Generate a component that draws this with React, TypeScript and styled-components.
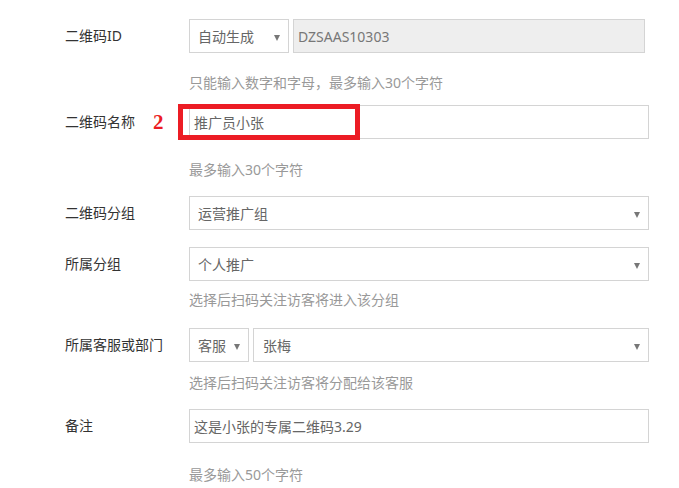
import React from "react";
import styled, { createGlobalStyle } from "styled-components";

const Global = createGlobalStyle`
  html, body { margin: 0; padding: 0; background: #fff; }
  body { font-family: "Noto Sans", "Noto Sans CJK SC", sans-serif; font-size: 14px; color: #333; }
`;

const Form = styled.div`
  width: 679px;
  height: 488px;
  padding: 19px 0 0 65px;
  box-sizing: border-box;
  overflow: hidden;
`;

const Row = styled.div<{ $mb?: number }>`
  display: flex;
  align-items: center;
  height: 34px;
  position: relative;
  margin-bottom: ${(p) => p.$mb ?? 0}px;
`;

const Label = styled.div`
  width: 124px;
  flex: none;
  font-size: 14px;
  color: #333;
  line-height: 20px;
`;

const Controls = styled.div<{ $w?: number }>`
  display: flex;
  gap: 4px;
  width: ${(p) => p.$w ?? 460}px;
  height: 34px;
  position: relative;
`;

const Box = styled.div<{ $w?: number; $readonly?: boolean; $select?: boolean }>`
  box-sizing: border-box;
  height: 34px;
  border: 1px solid #d4d4d4;
  background: ${(p) => (p.$readonly ? "#eeeeee" : "#fff")};
  ${(p) => (p.$w ? `width: ${p.$w}px; flex: none;` : "flex: 1;")}
  display: flex;
  align-items: center;
  padding: 0 ${(p) => (p.$select ? 8 : 4)}px;
  font-size: 14px;
  color: ${(p) => (p.$readonly ? "#777" : "#666")};
  position: relative;
  white-space: nowrap;
`;

const Caret = styled.span`
  position: absolute;
  right: 8px;
  top: 15px;
  width: 0;
  height: 0;
  border-left: 3.5px solid transparent;
  border-right: 3.5px solid transparent;
  border-top: 6px solid #777;
`;

const Hint = styled.div<{ $mt: number; $mb?: number }>`
  margin: ${(p) => p.$mt}px 0 ${(p) => p.$mb ?? 0}px 124px;
  line-height: 20px;
  font-size: 14px;
  color: #999;
  white-space: nowrap;
`;

const Marker = styled.span`
  position: absolute;
  left: 88px;
  top: 5px;
  font-family: "Liberation Serif", "Times New Roman", serif;
  font-weight: bold;
  font-size: 21px;
  line-height: 24px;
  color: #ec1c24;
`;

const Highlight = styled.div`
  position: absolute;
  left: -11px;
  top: -1px;
  width: 182px;
  height: 36px;
  box-sizing: border-box;
  border: 5px solid #ec1c24;
  pointer-events: none;
`;

const Select: React.FC<{ w?: number; children: React.ReactNode }> = ({ w, children }) => (
  <Box $w={w} $select>
    {children}
    <Caret />
  </Box>
);

export default function App() {
  return (
    <>
      <Global />
      <Form>
        <Row>
          <Label>二维码ID</Label>
          <Controls $w={456}>
            <Select w={100}>自动生成</Select>
            <Box $readonly>DZSAAS10303</Box>
          </Controls>
        </Row>
        <Hint $mt={20} $mb={12}>只能输入数字和字母，最多输入30个字符</Hint>

        <Row>
          <Label>二维码名称</Label>
          <Marker>2</Marker>
          <Controls>
            <Box>推广员小张</Box>
            <Highlight />
          </Controls>
        </Row>
        <Hint $mt={21} $mb={16}>最多输入30个字符</Hint>

        <Row $mb={17}>
          <Label>二维码分组</Label>
          <Controls>
            <Select>运营推广组</Select>
          </Controls>
        </Row>

        <Row>
          <Label>所属分组</Label>
          <Controls>
            <Select>个人推广</Select>
          </Controls>
        </Row>
        <Hint $mt={9} $mb={18}>选择后扫码关注访客将进入该分组</Hint>

        <Row>
          <Label>所属客服或部门</Label>
          <Controls>
            <Select w={60}>客服</Select>
            <Box $select style={{ paddingLeft: 9 }}>
              张梅
              <Caret />
            </Box>
          </Controls>
        </Row>
        <Hint $mt={11} $mb={16}>选择后扫码关注访客将分配给该客服</Hint>

        <Row>
          <Label>备注</Label>
          <Controls>
            <Box>这是小张的专属二维码3.29</Box>
          </Controls>
        </Row>
        <Hint $mt={22}>最多输入50个字符</Hint>
      </Form>
    </>
  );
}
